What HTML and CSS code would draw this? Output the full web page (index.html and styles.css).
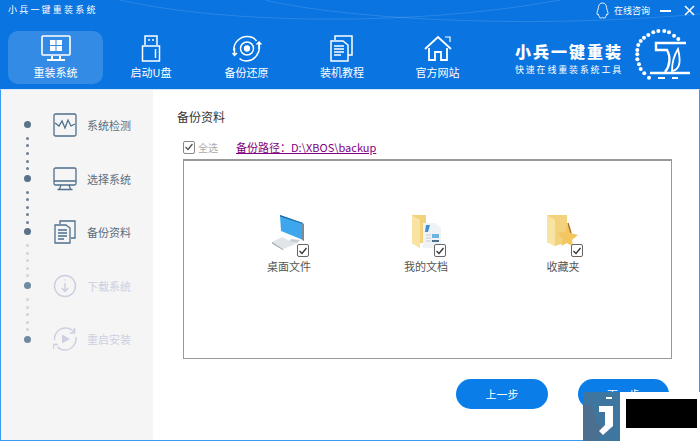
FILE: index.html
```html
<!DOCTYPE html>
<html lang="zh-CN">
<head>
    <meta charset="UTF-8">
    <meta name="viewport" content="width=device-width, initial-scale=1.0">
    <title>小兵一键重装系统</title>
    <link rel="stylesheet" href="styles.css">
</head>
<body>
    <div class="window">
        <div class="header">
            <svg class="header-arcs" width="700" height="89" viewBox="0 0 700 89" fill="none" stroke="#fff" stroke-opacity="0.13">
                <path d="M120 0C230 25 420 26 560 0"/>
                <path d="M265 0C340 18 520 30 700 14"/>
            </svg>
            <div class="topbar">
                <div class="app-title">小兵一键重装系统</div>
                <div class="top-actions">
                    <svg class="qq-icon" width="13" height="17" viewBox="0 0 13 17" fill="none" stroke="#fff" stroke-width="0.9">
                        <path d="M6.5 1C9.2 1 10.4 3 10.6 5.6C10.7 7.6 12.2 9.8 12 12C11.8 13 11 12.6 10.6 12C10.6 13.6 10 14.2 9.6 14.6C10 15.3 9.5 16 8 16C7.2 16 6.8 15.7 6.5 15.4C6.2 15.7 5.8 16 5 16C3.5 16 3 15.3 3.4 14.6C3 14.2 2.4 13.6 2.4 12C2 12.6 1.2 13 1 12C.8 9.8 2.3 7.6 2.4 5.6C2.6 3 3.8 1 6.5 1Z"/>
                    </svg>
                    <span class="consult">在线咨询</span>
                    <span class="win-min"></span>
                    <svg class="win-close" width="11" height="11" viewBox="0 0 11 11" stroke="#fff" stroke-width="1.5">
                        <path d="M1 1L10 10M10 1L1 10"/>
                    </svg>
                </div>
            </div>
            <div class="nav-row">
                <div class="nav">
                    <div class="nav-item active">
                        <svg width="30" height="27" viewBox="0 0 30 27" fill="none" stroke="#fff" stroke-width="1.6">
                            <rect x="1" y="1" width="28" height="19" rx="1"/>
                            <path d="M11 21V24M19 21V24M6 25H24" stroke-width="2"/>
                            <path d="M9 5h5.5v5H9zM15.5 5H21v5h-5.5zM9 11h5.5v5H9zM15.5 11H21v5h-5.5z" fill="#fff" stroke="none"/>
                        </svg>
                        <span>重装系统</span>
                    </div>
                    <div class="nav-item">
                        <svg width="30" height="27" viewBox="0 0 30 27" fill="none" stroke="#fff" stroke-width="1.5">
                            <path d="M9 10V1H21V10"/>
                            <rect x="6.5" y="11" width="17" height="15"/>
                            <path d="M12 5h2M16 5h2M19.5 14V23"/>
                        </svg>
                        <span>启动U盘</span>
                    </div>
                    <div class="nav-item">
                        <svg width="30" height="27" viewBox="0 0 30 27" fill="none" stroke="#fff" stroke-width="1.5">
                            <path d="M2 16C1 8 8 1 16 1.5C20 1.8 23 3.5 24.5 6"/>
                            <path d="M27 9C29 17 23 26 14 26C11.5 26 9 25 7.5 23.5"/>
                            <path d="M27 14V7M24.5 9.5L27 7L29.5 9.5M2.5 13V20M0.5 18L2.5 20.5L5 18"/>
                            <circle cx="15" cy="13.5" r="6.5"/>
                            <circle cx="15" cy="13.5" r="2.4" fill="#fff"/>
                        </svg>
                        <span>备份还原</span>
                    </div>
                    <div class="nav-item">
                        <svg width="30" height="27" viewBox="0 0 30 27" fill="none" stroke="#fff" stroke-width="1.5">
                            <path d="M8 5V1H25V20H21"/>
                            <path d="M4 6H16L21 10V26H4Z"/>
                            <path d="M7 11H17M7 14H17M7 17H17M7 20H14"/>
                        </svg>
                        <span>装机教程</span>
                    </div>
                    <div class="nav-item">
                        <svg width="30" height="27" viewBox="0 0 30 27" fill="none" stroke="#fff" stroke-width="1.8">
                            <path d="M2 14L15 2L28 14"/>
                            <path d="M6 13V25H12V17H18V25H24V13"/>
                            <path d="M22 2H27V7" stroke-width="1.2"/>
                        </svg>
                        <span>官方网站</span>
                    </div>
                </div>
                <div class="brand">
                    <div class="brand-text">
                        <div class="brand-name">小兵一键重装</div>
                        <div class="brand-slogan">快速在线重装系统工具</div>
                    </div>
                    <svg class="brand-mark" width="60" height="54" viewBox="0 0 60 54" fill="#fff">
                        <circle cx="46.3" cy="11" r="2"/><circle cx="42" cy="7.7" r="2"/><circle cx="37" cy="4.3" r="2"/><circle cx="32.3" cy="3" r="2"/><circle cx="26.3" cy="3" r="2"/><circle cx="21.3" cy="4.3" r="2"/><circle cx="16.3" cy="7" r="2"/><circle cx="12" cy="9.7" r="2"/><circle cx="8.7" cy="13" r="2"/><circle cx="6.3" cy="17" r="2"/><circle cx="5.3" cy="22" r="2"/><circle cx="5.3" cy="26.3" r="2"/><circle cx="5.3" cy="31.3" r="2"/><circle cx="7" cy="36.3" r="2"/><circle cx="8.7" cy="41" r="2"/><circle cx="12.3" cy="45.3" r="2"/><circle cx="17" cy="49.7" r="2"/>
                        <g fill="none" stroke="#fff">
                            <path d="M54 15H24V22H35C39 29 38 38 33 44" stroke-width="2.4"/>
                            <path d="M46 21C41 29 40 37 40 43C46 42 50 37 46 21Z" stroke-width="1.8"/>
                            <path d="M18 45H58" stroke-width="2.4"/>
                            <path d="M26 50H33M40 50H46" stroke-width="2.2"/>
                        </g>
                    </svg>
                </div>
            </div>
        </div>
        <div class="main">
            <div class="sidebar">
                <div class="timeline">
                    <i class="dot big"></i><i class="dot"></i><i class="dot"></i><i class="dot"></i><i class="dot"></i><i class="dot"></i>
                    <i class="dot big"></i><i class="dot"></i><i class="dot"></i><i class="dot"></i><i class="dot"></i><i class="dot"></i>
                    <i class="dot big"></i><i class="dot off"></i><i class="dot off"></i><i class="dot off"></i><i class="dot off"></i><i class="dot off"></i>
                    <i class="dot big later"></i><i class="dot off"></i><i class="dot off"></i><i class="dot off"></i><i class="dot off"></i><i class="dot off"></i>
                    <i class="dot big later"></i>
                </div>
                <div class="steps">
                    <div class="step">
                        <svg width="24" height="24" viewBox="0 0 24 24" fill="none" stroke="#4f6f8a" stroke-width="1.3">
                            <rect x="1" y="1" width="22" height="22" rx="1.5"/>
                            <path d="M2 10L6 13L9 8L12 15L15 7L18 13L22 11"/>
                        </svg>
                        <span>系统检测</span>
                    </div>
                    <div class="step">
                        <svg width="24" height="24" viewBox="0 0 24 24" fill="none" stroke="#4f6f8a" stroke-width="1.3">
                            <rect x="1" y="1" width="22" height="17" rx="1.5"/>
                            <path d="M1 14H23M8 18L6.5 22M16 18L17.5 22M4.5 22.5H19.5"/>
                        </svg>
                        <span>选择系统</span>
                    </div>
                    <div class="step">
                        <svg width="24" height="24" viewBox="0 0 24 24" fill="none" stroke="#4f6f8a" stroke-width="1.3">
                            <path d="M7 4V1H22V18H18"/>
                            <path d="M2 5H13L17 8V23H2Z"/>
                            <path d="M5 10H14M5 13H14M5 16H14M5 19H11"/>
                        </svg>
                        <span>备份资料</span>
                    </div>
                    <div class="step off">
                        <svg width="24" height="24" viewBox="0 0 24 24" fill="none" stroke="#cdd0e0" stroke-width="1.5">
                            <circle cx="12" cy="12" r="10.5"/>
                            <path d="M12 5.5V6.5M12 9V17M8.8 14L12 17.5L15.2 14"/>
                        </svg>
                        <span>下载系统</span>
                    </div>
                    <div class="step off">
                        <svg width="24" height="24" viewBox="0 0 24 24" fill="none" stroke="#cdd0e0" stroke-width="1.5">
                            <path d="M1.5 13C1 6.5 6 1 12.5 1C16 1 19 2.5 21 5"/>
                            <path d="M23 10C24 17 18.5 23 12 23C9 23 6.5 22 4.5 20"/>
                            <path d="M21.5 1V6H17M.5 22V17.5H5"/>
                            <path d="M9 7.5L17 12L9 16.5Z" fill="#cdd0e0" stroke="none"/>
                        </svg>
                        <span>重启安装</span>
                    </div>
                </div>
            </div>
            <div class="content">
                <h2 class="section-title">备份资料</h2>
                <div class="select-row">
                    <span class="checkbox small"><svg width="10" height="10" viewBox="0 0 10 10" fill="none" stroke="#555" stroke-width="1.3"><path d="M1.5 5L4 7.5L8.5 2"/></svg></span>
                    <span class="select-all">全选</span>
                    <a class="backup-path" href="#">备份路径：D:\XBOS\backup</a>
                </div>
                <div class="file-box">
                    <div class="file-item">
                        <div class="file-icon">
                            <svg width="40" height="40" viewBox="0 0 40 40">
                                <path d="M22 24L31 25L28 28L20 27Z" fill="#c9ced2"/>
                                <path d="M11 0L34 8V25L12 16Z" fill="#3ea6ec"/>
                                <path d="M11 0L34 8V9L11 1.5Z" fill="#1f6fa8"/>
                                <path d="M33 8L35 9V26L33 25Z" fill="#7b8a96"/>
                                <path d="M13 22L27 29L14 34L3 27Z" fill="#e2e5e7"/>
                                <path d="M3 27L14 34L14.5 35.5L3 28.5Z" fill="#a3aaaf"/>
                            </svg>
                            <span class="checkbox"><svg width="10" height="10" viewBox="0 0 10 10" fill="none" stroke="#333" stroke-width="1.3"><path d="M1.5 5L4 7.5L8.5 2"/></svg></span>
                        </div>
                        <span class="file-name">桌面文件</span>
                    </div>
                    <div class="file-item">
                        <div class="file-icon">
                            <svg width="40" height="40" viewBox="0 0 40 40">
                                <path d="M6 0H20V28H14V33L6 28Z" fill="#f3d27e"/>
                                <path d="M6 0L14 5V33L6 28Z" fill="#f9e3a2"/>
                                <path d="M17 8H29L35 13V33H17Z" fill="#f0f3f6"/>
                                <path d="M20 10L24 10L22 17H19Z" fill="#3f8fd6"/>
                                <path d="M26 19H33V23H26Z" fill="#6fb3e3"/>
                                <path d="M26 25H33V27H26Z" fill="#4a6f8c"/>
                                <path d="M20 20H25M20 23H25M20 26H25" stroke="#c3cbd2"/>
                            </svg>
                            <span class="checkbox"><svg width="10" height="10" viewBox="0 0 10 10" fill="none" stroke="#333" stroke-width="1.3"><path d="M1.5 5L4 7.5L8.5 2"/></svg></span>
                        </div>
                        <span class="file-name">我的文档</span>
                    </div>
                    <div class="file-item">
                        <div class="file-icon">
                            <svg width="40" height="40" viewBox="0 0 40 40">
                                <path d="M4 0H24V27L12 31L4 27Z" fill="#f3d27e"/>
                                <path d="M4 0L12 5V31L4 27Z" fill="#f9e3a2"/>
                                <path d="M25 8L28 18L35 20L29 25L30 32L24 28L18 31L20 24L14 18L22 17Z" fill="#f3c660"/>
                                <path d="M25 8L28 18" stroke="#a8702c" stroke-width="1.4"/>
                            </svg>
                            <span class="checkbox"><svg width="10" height="10" viewBox="0 0 10 10" fill="none" stroke="#333" stroke-width="1.3"><path d="M1.5 5L4 7.5L8.5 2"/></svg></span>
                        </div>
                        <span class="file-name">收藏夹</span>
                    </div>
                </div>
                <div class="buttons">
                    <button class="btn wide">上一步</button>
                    <button class="btn">下一步</button>
                </div>
            </div>
        </div>
        <div class="watermark">
            <svg width="37" height="49" viewBox="0 0 37 49">
                <rect width="37" height="49" fill="#3f76a0"/>
                <path d="M0 12L10 14L13 30L22 38L12 49H0Z" fill="#4c6f8f"/>
                <path d="M23 5H29V7H23ZM16 14H30V34L20 43L16 39L22 33V20H16Z" fill="#fff"/>
            </svg>
            <div class="watermark-block"></div>
        </div>
    </div>
</body>
</html>
```

FILE: styles.css
```css
* {
    box-sizing: border-box;
}

body {
    margin: 0;
    width: 700px;
    height: 441px;
    overflow: hidden;
    font-family: "Noto Sans CJK SC", "Noto Sans", sans-serif;
    background: white;
}

.window {
    position: relative;
    width: 700px;
    height: 441px;
    display: flex;
    flex-direction: column;
}

.header {
    position: relative;
    height: 89px;
    flex-shrink: 0;
    background: #0a74e0;
    color: white;
}

.header-arcs {
    position: absolute;
    top: 0;
    left: 0;
}

.topbar {
    height: 31px;
    display: flex;
    justify-content: space-between;
    align-items: flex-start;
}

.app-title {
    margin: 3px 0 0 8px;
    font-size: 9px;
    line-height: 13px;
    letter-spacing: 2.2px;
}

.top-actions {
    display: flex;
    align-items: center;
    margin: 2px 5px 0 0;
    height: 17px;
}

.consult {
    margin-left: 5px;
    font-size: 9px;
}

.win-min {
    width: 11px;
    height: 2px;
    margin: 0 13px 0 10px;
    background: white;
}

.nav-row {
    display: flex;
    justify-content: space-between;
}

.nav {
    display: flex;
    gap: 0.5px;
    padding-left: 8px;
}

.nav-item {
    width: 95px;
    height: 53px;
    padding-top: 4px;
    border-radius: 10px;
    display: flex;
    flex-direction: column;
    align-items: center;
    font-size: 11px;
    line-height: 14px;
    gap: 3px;
}

.nav-item.active {
    background: rgba(255,255,255,0.17);
}

.brand {
    display: flex;
    margin: -3px 8px 0 0;
}

.brand-text {
    width: 117px;
    padding-top: 13px;
}

.brand-name {
    font-size: 16px;
    line-height: 20px;
    font-weight: 900;
    letter-spacing: 2px;
    white-space: nowrap;
}

.brand-slogan {
    margin-top: 3px;
    font-size: 9px;
    line-height: 12px;
    letter-spacing: 1.8px;
    white-space: nowrap;
}

.main {
    flex: 1;
    display: flex;
    border: 1px solid #3b9af0;
    border-top: 1px solid #d6e9fb;
}

.sidebar {
    width: 152px;
    display: flex;
    background: #f5f5f5;
}

.timeline {
    width: 52px;
    padding-top: 31px;
    display: flex;
    flex-direction: column;
    align-items: center;
    gap: 4.55px;
}

.dot {
    width: 3px;
    height: 3px;
    border-radius: 50%;
    background: #6f7f8f;
}

.dot.off {
    background: #cfd3dc;
}

.dot.big {
    width: 7px;
    height: 7px;
    margin-bottom: 4.4px;
    background: #5a7288;
}

.dot.big.later {
    background: #6f8aa0;
}

.steps {
    padding-top: 23px;
    display: flex;
    flex-direction: column;
    gap: 29.5px;
}

.step {
    display: flex;
    align-items: center;
    height: 24px;
    gap: 10px;
    font-size: 11px;
    color: #5b6f80;
}

.step.off {
    color: #cdd0e0;
}

.content {
    flex: 1;
    position: relative;
    padding: 18px 0 0 24px;
}

.section-title {
    margin: 0;
    font-size: 12px;
    font-weight: 400;
    line-height: 18px;
    color: #333;
}

.select-row {
    display: flex;
    align-items: center;
    height: 14px;
    margin: 14px 0 0 6px;
}

.checkbox {
    width: 12px;
    height: 13px;
    display: flex;
    align-items: center;
    justify-content: center;
    border: 1px solid #666;
    border-radius: 2px;
    background: white;
}

.checkbox.small {
    border-color: #888;
}

.select-all {
    margin-left: 3px;
    font-size: 10px;
    color: #aaa;
}

.backup-path {
    margin-left: 18px;
    font-size: 11px;
    color: #800080;
}

.file-box {
    width: 489px;
    height: 200px;
    margin: 5px 0 0 6px;
    padding-top: 54px;
    border: 1px solid #999;
    border-top-width: 2px;
    display: flex;
    padding-left: 75px;
    gap: 77px;
}

.file-item {
    width: 60px;
    display: flex;
    flex-direction: column;
    align-items: center;
}

.file-icon {
    position: relative;
    width: 40px;
    height: 40px;
}

.file-icon .checkbox {
    position: absolute;
    right: 0;
    bottom: -2px;
}

.file-name {
    margin-top: 3px;
    font-size: 11px;
    line-height: 16px;
    color: #555;
}

.buttons {
    display: flex;
    gap: 30px;
    margin: 20px 0 0 279px;
}

.btn {
    width: 91px;
    height: 30px;
    border: none;
    border-radius: 15px;
    background: #0a7de8;
    color: white;
    font-family: inherit;
    font-size: 11px;
}

.btn.wide {
    width: 92px;
}

.watermark {
    position: absolute;
    left: 583px;
    top: 392px;
    width: 117px;
    height: 49px;
    display: flex;
    background: white;
}

.watermark-block {
    width: 71px;
    height: 29px;
    margin: 7px 0 0 6px;
    background: black;
}
```
